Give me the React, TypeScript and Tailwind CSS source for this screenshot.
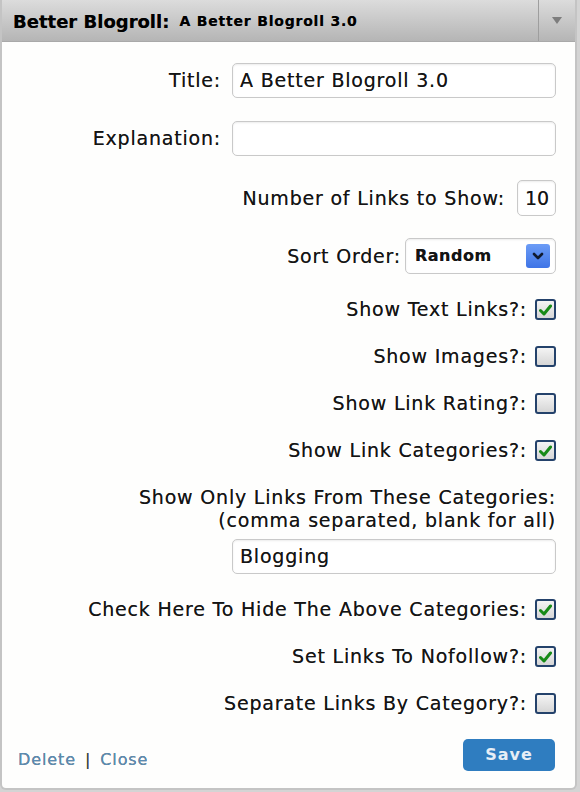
import React from 'react';

const font = { fontFamily: '"DejaVu Sans", Verdana, sans-serif' };

function Check({ checked }: { checked: boolean }) {
  return (
    <span className="inline-flex h-[21px] w-[21px] items-center justify-center rounded-[3px] border-2 border-[#24426b] bg-gradient-to-b from-[#f4f4f4] to-[#d6d6d6]">
      {checked && (
        <svg width="13" height="12" viewBox="0 0 13 12">
          <path d="M1.5 6.5 L5 10 L11.5 2" fill="none" stroke="#178a17" strokeWidth="3" strokeLinecap="round" strokeLinejoin="round" />
        </svg>
      )}
    </span>
  );
}

function CheckRow({ label, checked }: { label: string; checked: boolean }) {
  return (
    <div className="flex h-[47px] items-center justify-end gap-[8px]">
      <span>{label}</span>
      <Check checked={checked} />
    </div>
  );
}

const inputCls =
  'h-[35px] rounded-[5px] border border-[#c9c9c9] bg-white px-[7px] shadow-[inset_0_1px_2px_rgba(0,0,0,0.08)] flex items-center';

export default function App() {
  return (
    <div
      className="h-[792px] w-[580px] bg-[#d4d4d4] text-[19px] tracking-[0.8px] text-[#141414] [text-shadow:0_0_0.6px_rgba(0,0,0,0.6)]"
      style={font}
    >
      <div className="flex h-[790px] w-[577px] flex-col overflow-hidden rounded-b-[6px] border-x-2 border-b-2 border-[#c4c4c4] bg-[#fefefd]">
        {/* header */}
        <div className="flex h-[42px] shrink-0 items-stretch border-b border-[#a9a9a9] bg-gradient-to-b from-[#dcdcdc] to-[#b5b5b5]">
          <div className="flex flex-1 items-center pl-[11px] pt-[2px] tracking-normal text-black">
            <span className="text-[18px] font-bold">Better Blogroll:</span>
            <span className="ml-[10px] text-[14px] font-bold tracking-[0.8px]">A Better Blogroll 3.0</span>
          </div>
          <div className="flex w-[37px] items-center justify-center border-l border-[#9e9e9e]">
            <svg width="12" height="9" viewBox="0 0 12 9">
              <path d="M1 1 L11 1 L6 8 Z" fill="#7d7d7d" />
            </svg>
          </div>
        </div>

        {/* form */}
        <div className="flex flex-1 flex-col pl-[16px] pr-[19px]">
          <div className="mt-[21px] flex items-center justify-end gap-[11px]">
            <span>Title:</span>
            <div className={`${inputCls} w-[324px]`}>A Better Blogroll 3.0</div>
          </div>
          <div className="mt-[23px] flex items-center justify-end gap-[11px]">
            <span>Explanation:</span>
            <div className={`${inputCls} w-[324px]`} />
          </div>
          <div className="mt-[24px] flex items-center justify-end gap-[12px]">
            <span>Number of Links to Show:</span>
            <div className={`${inputCls} h-[36px] w-[39px] px-[3px] tracking-normal`}>10</div>
          </div>
          <div className="mt-[22px] flex items-center justify-end gap-[4px]">
            <span>Sort Order:</span>
            <div className={`${inputCls} h-[36px] w-[151px] justify-between pl-[9px] pr-[5px]`}>
              <span className="text-[16px] font-bold tracking-[0.5px]">Random</span>
              <span className="flex h-[24px] w-[24px] items-center justify-center rounded-[3px] bg-gradient-to-b from-[#6c9cf6] to-[#3f74e6]">
                <svg width="12" height="8" viewBox="0 0 12 8">
                  <path d="M2 2 L6 6 L10 2" fill="none" stroke="#101a30" strokeWidth="2.6" strokeLinecap="round" strokeLinejoin="round" />
                </svg>
              </span>
            </div>
          </div>

          <div className="mt-[12px]">
            <CheckRow label="Show Text Links?:" checked />
            <CheckRow label="Show Images?:" checked={false} />
            <CheckRow label="Show Link Rating?:" checked={false} />
            <CheckRow label="Show Link Categories?:" checked />
          </div>

          <div className="mt-[12px] flex flex-col items-end leading-[23px]">
            <span>Show Only Links From These Categories:</span>
            <span>(comma separated, blank for all)</span>
            <div className={`${inputCls} mt-[7px] w-[324px]`}>Blogging</div>
          </div>

          <div className="mt-[12px]">
            <CheckRow label="Check Here To Hide The Above Categories:" checked />
            <CheckRow label="Set Links To Nofollow?:" checked />
            <CheckRow label="Separate Links By Category?:" checked={false} />
          </div>

          <div className="mt-[10px] flex items-center justify-between">
            <div className="pt-[11px] text-[16px] tracking-[0.9px] text-[#5a8cb3]">
              Delete <span className="mx-[3px] text-[#444]">|</span> Close
            </div>
            <button className="mr-[1px] h-[32px] w-[92px] rounded-[5px] bg-[#2f7dc0] text-[16px] font-bold tracking-[1px] text-[#e6eef6] [text-shadow:none]">
              Save
            </button>
          </div>
        </div>
      </div>
    </div>
  );
}
